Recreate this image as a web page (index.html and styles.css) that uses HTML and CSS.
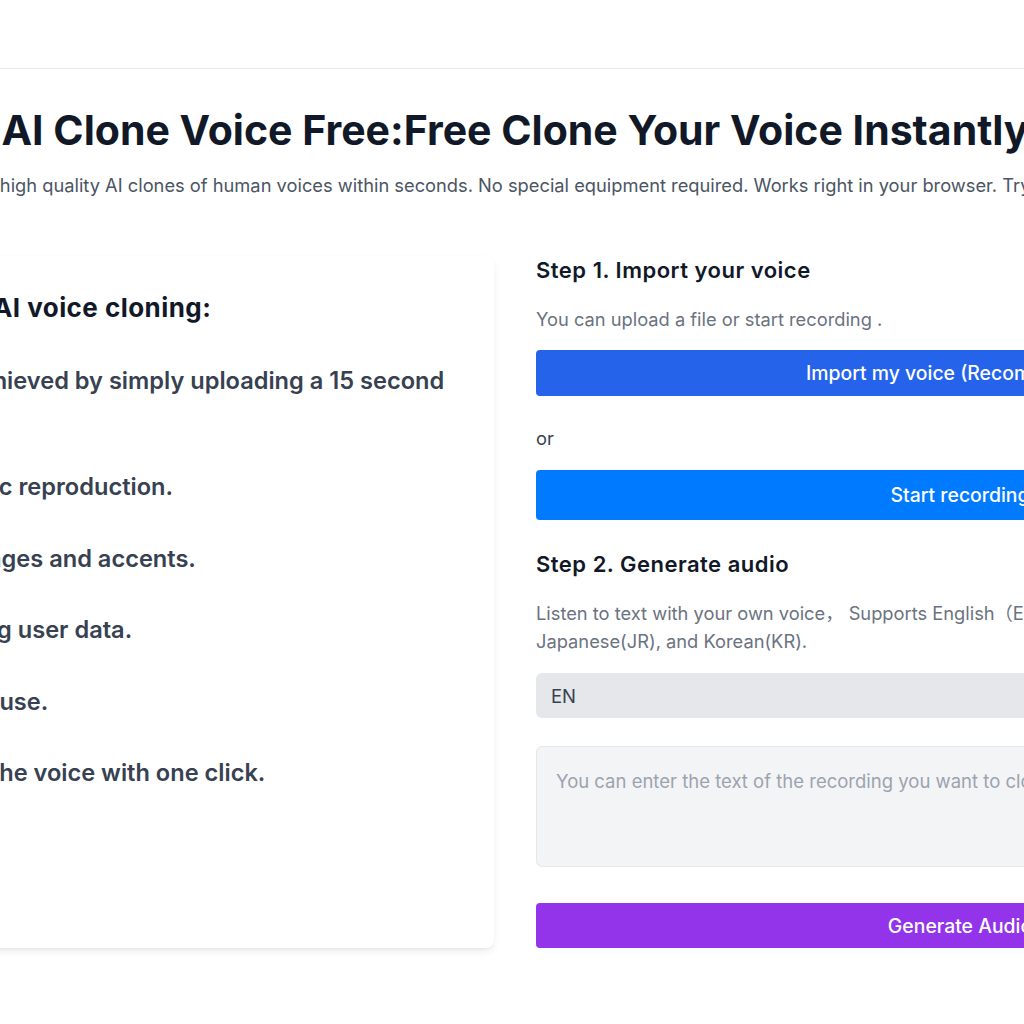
FILE: index.html
```html
<!DOCTYPE html>
<html lang="en">
<head>
<meta charset="utf-8">
<title>AI Clone Voice Free</title>
<link rel="stylesheet" href="styles.css">
</head>
<body>
<header class="site-header"></header>
<main class="page">
  <h1 class="title">AI Clone Voice Free:Free Clone Your Voice Instantly</h1>
  <p class="subtitle">Create high quality AI clones of human voices within seconds. No special equipment required. Works right in your browser. Try it now!</p>
  <div class="columns">
    <section class="card">
      <h2 class="card-title">The main advantages of AI voice cloning:</h2>
      <ul class="features">
        <li>Fast voice cloning can be achieved by simply uploading a 15 second audio clip.</li>
        <li>Natural tone and very realistic reproduction.</li>
        <li>Supporting numerous languages and accents.</li>
        <li>Privacy first, we never storing user data.</li>
        <li>Entirely free and intuitive for use.</li>
        <li>Easily download and export the voice with one click.</li>
      </ul>
    </section>
    <section class="steps">
      <h3 class="step-title">Step 1. Import your voice</h3>
      <p class="step-text">You can upload a file or start recording .</p>
      <button class="btn btn-import">Import my voice (Recommended)</button>
      <p class="or">or</p>
      <button class="btn btn-record">Start recording</button>
      <h3 class="step-title step2">Step 2. Generate audio</h3>
      <p class="step-text">Listen to text with your own voice， Supports English（EN), Chinese(ZH),<br>Japanese(JR), and Korean(KR).</p>
      <select class="lang">
        <option>EN</option>
        <option>ZH</option>
        <option>JR</option>
        <option>KR</option>
      </select>
      <textarea class="text-input" placeholder="You can enter the text of the recording you want to clone..."></textarea>
      <button class="btn btn-generate">Generate Audio</button>
    </section>
  </div>
</main>
</body>
</html>
```
FILE: styles.css
```css
* { box-sizing: border-box; }
html, body { margin: 0; padding: 0; background: #ffffff; }
body {
  font-family: Inter, "Noto Sans", "Noto Sans CJK SC", sans-serif;
  color: #111827;
  overflow: hidden;
  width: 1024px;
  height: 1024px;
}
.site-header {
  height: 69px;
  border-bottom: 1px solid #e5e7eb;
}
.page {
  width: 1738px;
  margin-left: -354px;
}
.title {
  margin: 37px 0 0;
  font-size: 41px;
  line-height: 48px;
  font-weight: 700;
  text-align: center;
  color: #111827;
  white-space: nowrap;
}
.subtitle {
  margin: 17px 0 0;
  font-size: 18.3px;
  line-height: 28px;
  text-align: center;
  color: #4b5563;
  white-space: nowrap;
}
.columns {
  display: grid;
  grid-template-columns: 848px 848px;
  column-gap: 42px;
  margin-top: 57px;
}
.card {
  background: #fff;
  border-radius: 8px;
  box-shadow: 0 4px 10px -2px rgba(0,0,0,0.10), 0 2px 4px -2px rgba(0,0,0,0.06);
  padding: 36px 40px 40px 25px;
}
.card-title {
  margin: 0;
  font-size: 26px;
  line-height: 32px;
  font-weight: 700;
  letter-spacing: 0.45px;
  color: #111827;
}
.features {
  list-style: none;
  margin: 40px 0 0;
  padding: 0;
}
.features li {
  font-size: 23.6px;
  line-height: 34.5px;
  font-weight: 600;
  color: #374151;
  margin-bottom: 37px;
}
.steps {
  display: flex;
  flex-direction: column;
}
.step-title {
  margin: 0;
  font-size: 22px;
  line-height: 28px;
  font-weight: 600;
  letter-spacing: 0.5px;
  color: #111827;
}
.step2 { margin-top: 30px; }
.step-text {
  margin: 21px 0 0;
  font-size: 18.3px;
  line-height: 28px;
  color: #6b7280;
}
.or {
  margin: 28px 0 0;
  font-size: 18.3px;
  line-height: 28px;
  color: #374151;
}
.btn {
  display: block;
  width: 100%;
  border: none;
  border-radius: 4px;
  color: #fff;
  font-family: Inter, "Noto Sans", sans-serif;
  font-size: 19.4px;
  font-weight: 500;
  text-align: center;
  padding: 0;
}
.btn-import {
  margin-top: 17px;
  height: 46px;
  background: #2563eb;
}
.btn-record {
  margin-top: 18px;
  height: 50px;
  background: #007aff;
}
.btn-generate {
  margin-top: 36px;
  height: 45px;
  background: #9333ea;
}
.lang {
  margin-top: 18px;
  height: 45px;
  width: 100%;
  appearance: none;
  -webkit-appearance: none;
  border: none;
  border-radius: 6px;
  background: #e5e7eb;
  padding: 0 15px;
  font-family: Inter, "Noto Sans", sans-serif;
  font-size: 18.5px;
  color: #374151;
}
.text-input {
  margin-top: 28px;
  height: 121px;
  width: 100%;
  resize: none;
  border: 1px solid #e5e7eb;
  border-radius: 6px;
  background: #f3f4f6;
  padding: 20px 19px;
  font-family: Inter, "Noto Sans", sans-serif;
  font-size: 18.5px;
  line-height: 28px;
  color: #374151;
}
.text-input::placeholder { color: #9ca3af; }
```
